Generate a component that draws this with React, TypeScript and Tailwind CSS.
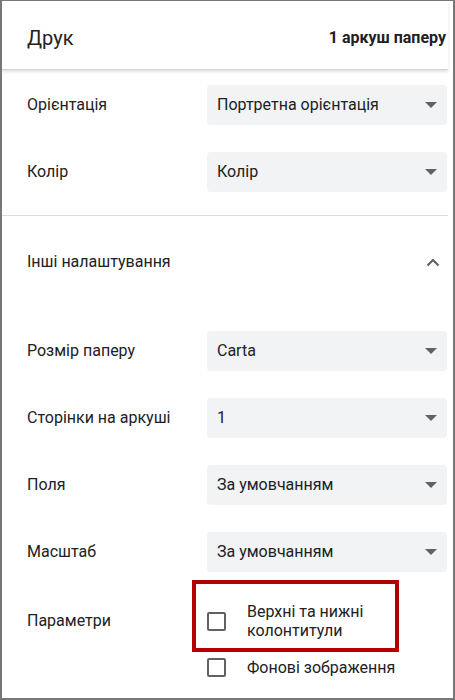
import React from "react";

const Arrow = () => (
  <svg width="12" height="6" viewBox="0 0 12 6" className="shrink-0">
    <polygon points="0,0 12,0 6,6" fill="#5f6368" />
  </svg>
);

const Select = ({ value }: { value: string }) => (
  <div className="flex h-[40px] w-[240px] shrink-0 items-center justify-between rounded-[4px] bg-[#f1f3f4] pl-[10px] pr-[10px]">
    <span className="text-[16px] text-[#202124]">{value}</span>
    <Arrow />
  </div>
);

const Row = ({ label, value }: { label: string; value: string }) => (
  <div className="flex h-[67px] items-center">
    <div className="w-[205px] shrink-0 pl-[25px] text-[16px] text-[#202124]">{label}</div>
    <Select value={value} />
  </div>
);

const Checkbox = () => (
  <div className="h-[19px] w-[19px] shrink-0 rounded-[2px] border-2 border-[#5f6368]" />
);

export default function App() {
  return (
    <div
      className="relative h-[700px] w-[455px] overflow-hidden border-x-2 border-t border-b-2 border-[#777777] bg-white"
      style={{ fontFamily: "Roboto, 'Noto Sans', sans-serif" }}
    >
      <div className="flex">
        <div className="w-[446px] shrink-0">
          <div className="relative z-10 flex h-[69px] items-center justify-between border-b border-[#d4d4d4] pl-[25px] pr-[2px] pt-[6px] shadow-[0_2px_3px_rgba(0,0,0,0.12)]">
            <span className="text-[20px] text-[#202124]">Друк</span>
            <span className="text-[16px] font-bold text-[#202124]">1 аркуш паперу</span>
          </div>
          <div className="pt-[1px]">
            <Row label="Орієнтація" value="Портретна орієнтація" />
            <Row label="Колір" value="Колір" />
            <div className="mt-[10px] h-px bg-[#dadce0]" />
            <div className="flex h-[92px] items-center justify-between pl-[25px] pr-[8px]">
              <span className="text-[16px] text-[#202124]">Інші налаштування</span>
              <svg width="14" height="9" viewBox="0 0 14 9">
                <polyline points="1.5,7.5 7,2 12.5,7.5" fill="none" stroke="#5f6368" strokeWidth="2.2" />
              </svg>
            </div>
            <div className="pt-[9px]">
              <Row label="Розмір паперу" value="Carta" />
              <Row label="Сторінки на аркуші" value="1" />
              <Row label="Поля" value="За умовчанням" />
              <Row label="Масштаб" value="За умовчанням" />
            </div>
            <div className="flex pt-[17px]">
              <div className="flex h-[38px] w-[205px] shrink-0 items-center pl-[25px] text-[16px] text-[#202124]">
                Параметри
              </div>
              <div className="flex flex-col gap-[18px]">
                <div className="flex items-center gap-[21px]">
                  <Checkbox />
                  <div className="text-[16px] leading-[19px] text-[#202124]">
                    Верхні та нижні
                    <br />
                    колонтитули
                  </div>
                </div>
                <div className="flex items-center gap-[21px]">
                  <Checkbox />
                  <div className="text-[16px] leading-[19px] text-[#202124]">Фонові зображення</div>
                </div>
              </div>
            </div>
          </div>
        </div>
      </div>
      <div className="pointer-events-none absolute left-[190px] top-[579px] h-[72px] w-[207px] border-[4px] border-[#b50000]" />
    </div>
  );
}
